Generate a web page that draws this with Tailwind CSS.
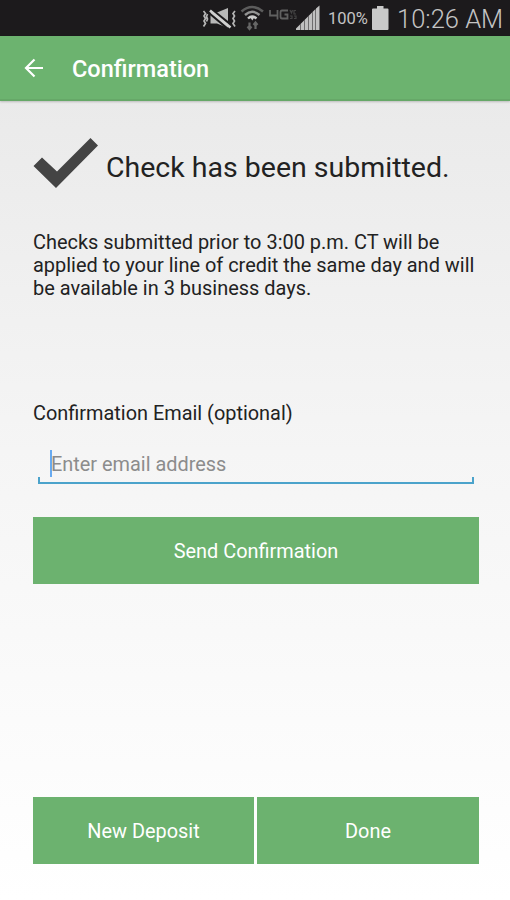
<!DOCTYPE html>
<html lang="en">
  <head>
    <meta charset="UTF-8" />
    <meta name="viewport" content="width=device-width, initial-scale=1.0" />
    <title>Confirmation</title>
    <script src="https://cdn.jsdelivr.net/npm/@tailwindcss/browser@4"></script>
  </head>
  <body class="font-[Roboto,sans-serif] text-[#222]">
    <div class="flex h-[900px] w-[510px] flex-col overflow-hidden bg-linear-to-b from-[#e7e7e7] via-[#f5f5f5] to-white">
      <!-- Status bar -->
      <div class="flex h-[36px] shrink-0 items-center bg-[#1c1a1c] pl-[202px] text-[#c4c4c4]">
        <svg class="h-[36px] w-[120px] shrink-0" viewBox="202 0 120 36" fill="none">
          <path d="M203.500 11l2 2.500-1.500 2.500 1.500 2.500-1.500 2.500 1.500 2.500-2 3M207.500 14l-1 2.500 1 2.500-1 2.500M235 11l-2 2.500 1.500 2.500-1.500 2.500 1.500 2.500-1.500 2.500 2 3" stroke="#b5b5b5" stroke-width="1.700" />
          <path d="M210.500 12.500h6.500l11-4.500v20l-11-4.500h-6.500z" fill="#b8b8b8" />
          <path d="M211 9l20 16" stroke="#1c1a1c" stroke-width="2.500" />
          <path d="M209 13l19 16" stroke="#1c1a1c" stroke-width="2" />
          <path d="M210 10.500l20.500 17" stroke="#d0d0d0" stroke-width="2.600" />
          <path d="M241.500 11.500Q252 2.500 263 11.500" stroke="#5c5c5c" stroke-width="2.500" />
          <path d="M245 15Q252 8.500 259.500 15" stroke="#929292" stroke-width="2.400" />
          <path d="M248 18.500Q252 14.500 256.500 18.500" stroke="#c8c8c8" stroke-width="2.400" />
          <path d="M250 17h4.500l-2.200 3.500z" fill="#ccc" />
          <path d="M249.500 22.500V29M247.500 26.500l2 2.500 2-2.500M255.500 29v-6.500M253.500 25l2-2.500 2 2.500" stroke="#666" stroke-width="2.200" />
          <path d="M270 10v5.500h8M277.500 10v9.500M288 10.500h-6q-1.500 0-1.500 2v4q0 2 1.500 2h5.500v-4h-3" stroke="#606060" stroke-width="1.800" />
          <path d="M290 10l1.500 3 1-3M296 10.500h-2V14h2M290 16h2v2.500h-2M294 16h2v2.500h-2" stroke="#444" stroke-width="1.200" />
          <path d="M296 30v-1.500l4-4V30zM300.500 30v-6l3.500-3.500V30zM304.500 30V20l3.500-3.500V30zM308.500 30V16l3.500-3.500V30zM312.500 30V12l3-3V30zM316 30V8.500l3.500-3V30z" fill="#c0c0c0" />
        </svg>
        <span class="ml-[6px] w-[41px] pt-[3px] text-[16.5px] whitespace-nowrap">100%</span>
        <svg class="ml-[2px] h-[36px] w-[18px] shrink-0" viewBox="371 0 18 36">
          <path d="M377 6h6.500v2.500h4q1 0 1 1V29q0 1-1 1H373q-1 0-1-1V9.500q0-1 1-1h4z" fill="#c9c9c9" />
        </svg>
        <span class="ml-[8px] pt-[2px] text-[25.5px] font-light whitespace-nowrap">10:26 AM</span>
      </div>

      <!-- App bar -->
      <header class="flex h-[65px] shrink-0 items-center border-b-2 border-[#66a868] bg-[#6cb36f] pl-6 text-white shadow-[0_1px_2px_rgba(0,0,0,0.2)]">
        <svg class="h-5 w-5" viewBox="0 0 20 20" fill="none" stroke="currentColor" stroke-width="2.200">
          <path d="M19 10H2M10.500 1.500L2 10l8.500 8.500" />
        </svg>
        <h1 class="ml-[28px] pt-[4px] text-[23.5px] font-medium">Confirmation</h1>
      </header>

      <main class="flex flex-1 flex-col pt-[37px] pr-[31px] pl-[33px]">
        <div class="flex h-[52px] items-center">
          <svg class="h-[52px] w-[66px] shrink-0" viewBox="0 0 66 52">
            <path d="M0.500 28L9 19.500l15 14L57.500 0l7.500 7.500L23 50z" fill="#444" />
          </svg>
          <h2 class="ml-[7px] pt-[8px] text-[28.5px] whitespace-nowrap">Check has been submitted.</h2>
        </div>

        <p class="mt-[41px] text-[19.95px] leading-[23px] whitespace-nowrap">
          Checks submitted prior to 3:00 p.m. CT will be<br />
          applied to your line of credit the same day and will<br />
          be available in 3 business days.
        </p>

        <label for="email" class="mt-[102px] text-[19.9px] leading-[23px]">Confirmation Email (optional)</label>
        <div class="mt-[24px] ml-[5px] flex h-[35px] w-[436px] flex-col">
          <div class="flex h-[28px] items-center pl-[12px]">
            <span class="h-[27px] w-[2px] bg-[#68aaf0]"></span>
            <input id="email" type="email" placeholder="Enter email address" class="-ml-px h-[28px] w-[410px] pt-[4px] text-[19.9px] outline-none placeholder:text-[#8c8c8c]" />
          </div>
          <div class="h-[7px] border-x-2 border-b-2 border-[#4ba3cb]"></div>
        </div>

        <button class="mt-[33px] h-[67px] bg-[#6cb26f] pt-[2px] text-[19.9px] text-white">Send Confirmation</button>

        <div class="mt-auto mb-9 grid grid-cols-[221px_222px] gap-[3px]">
          <button class="h-[67px] bg-[#6cb26f] pt-[2px] text-[19.9px] text-white">New Deposit</button>
          <button class="h-[67px] bg-[#6cb26f] pt-[2px] text-[19.9px] text-white">Done</button>
        </div>
      </main>
    </div>
  </body>
</html>
